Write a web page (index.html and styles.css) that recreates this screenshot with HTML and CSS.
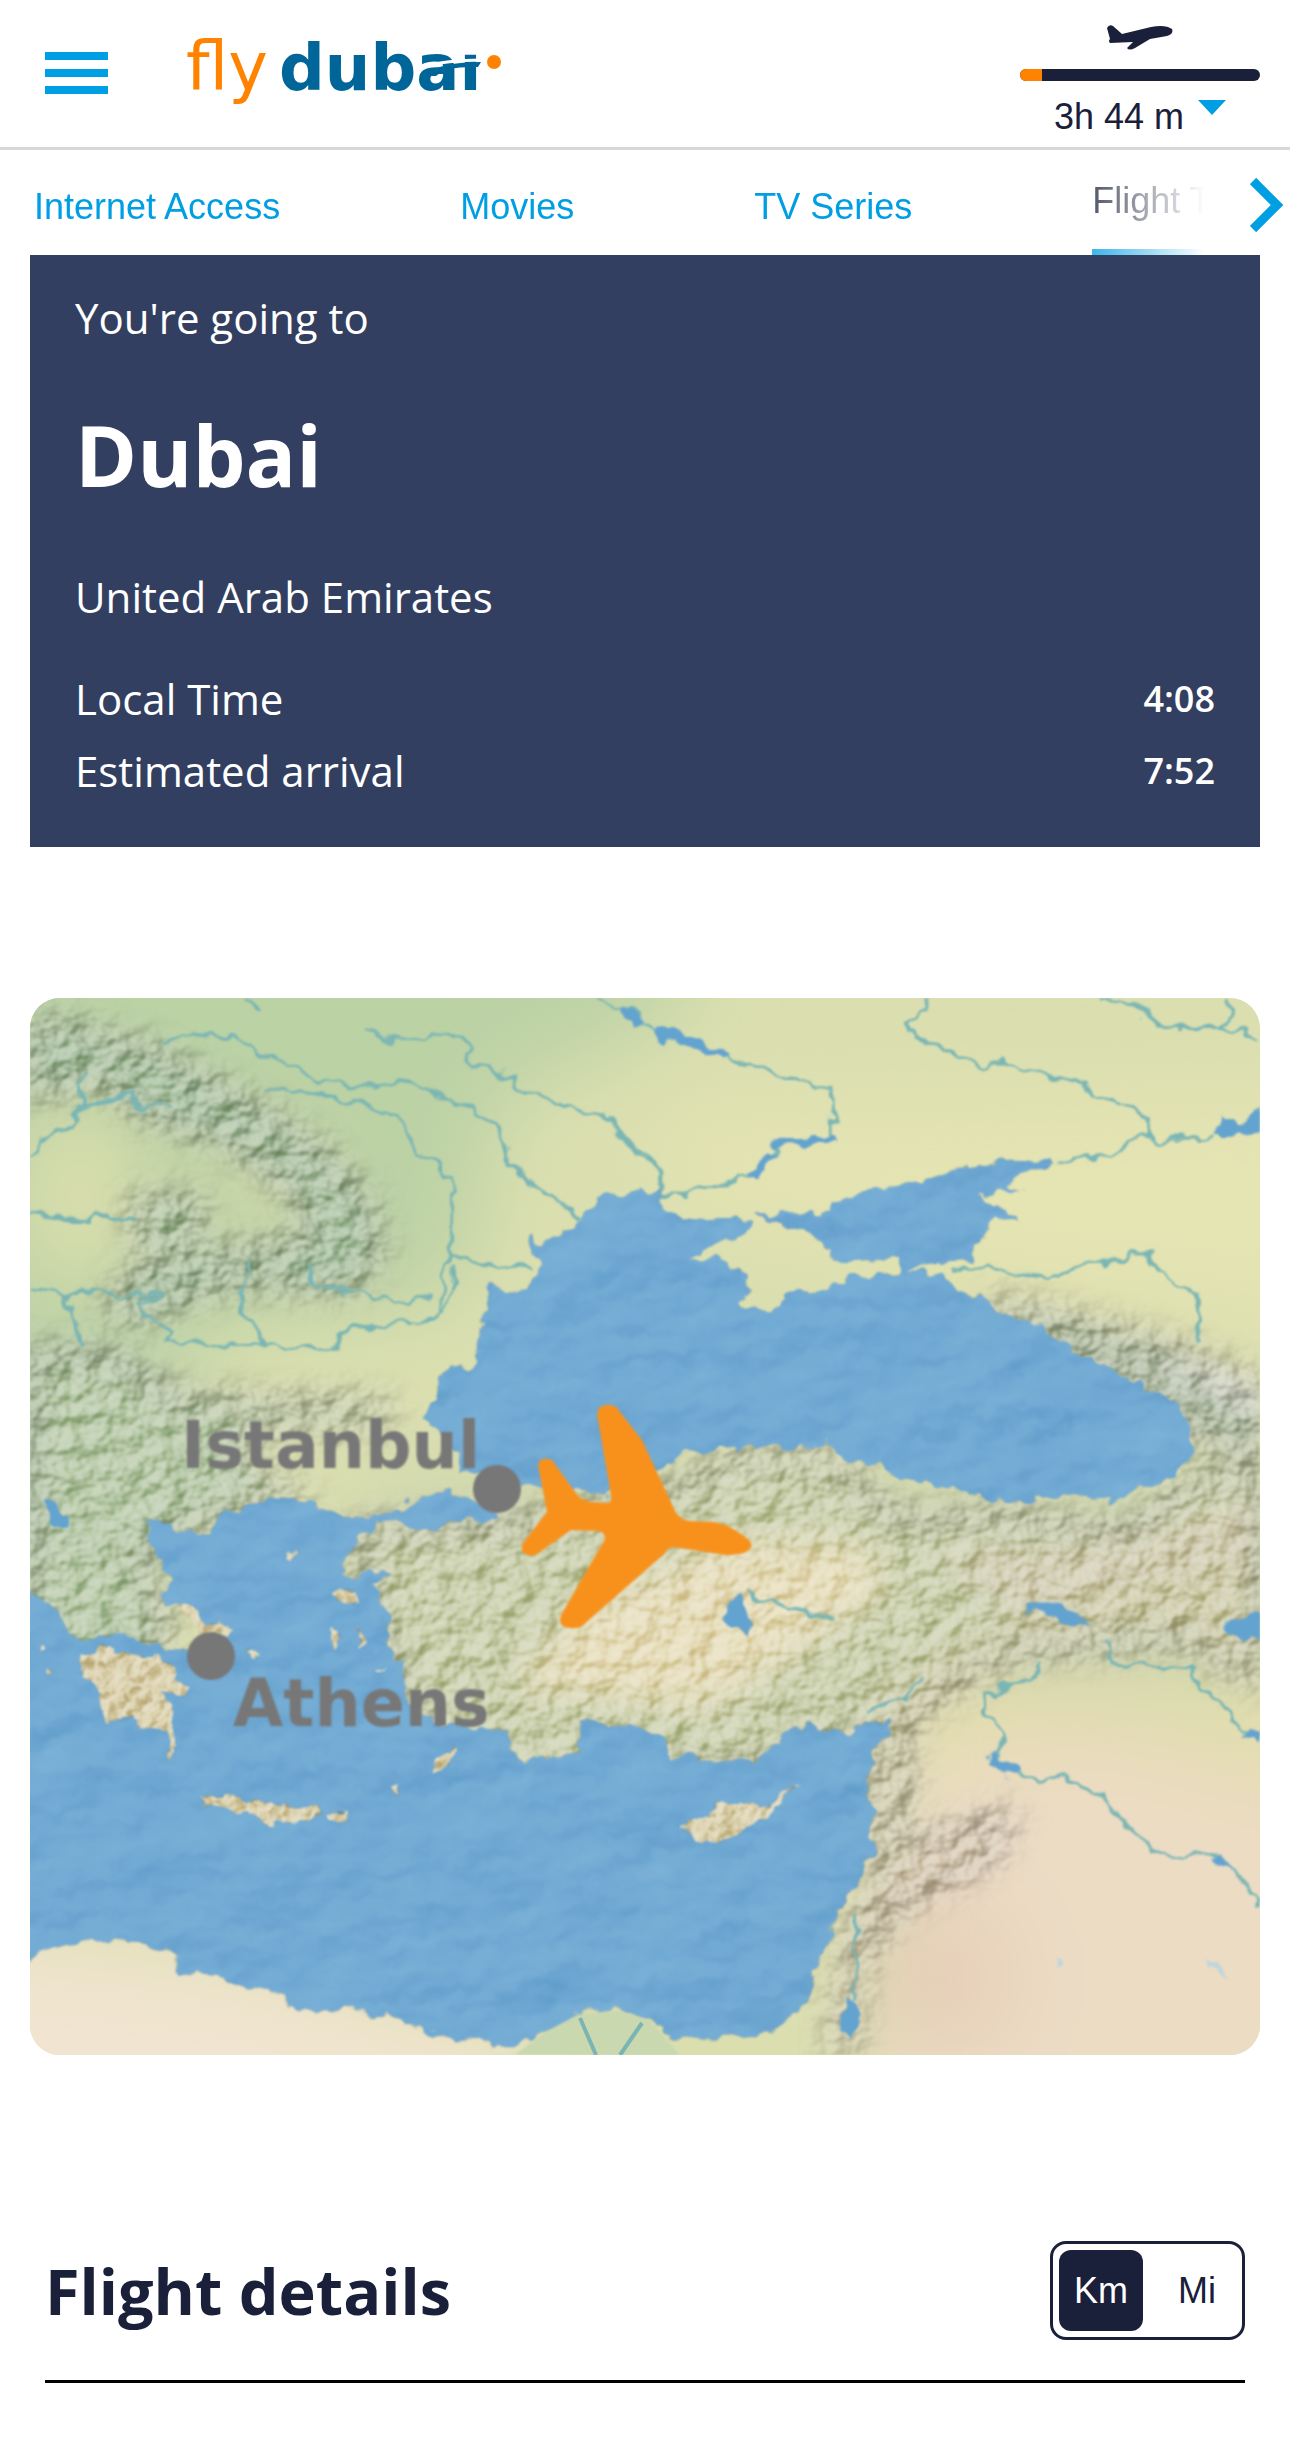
FILE: index.html
```html
<!DOCTYPE html>
<html lang="en">
<head>
<meta charset="utf-8">
<meta name="viewport" content="width=device-width, initial-scale=1">
<title>flydubai – Flight Tracker</title>
<link rel="stylesheet" href="styles.css">
</head>
<body>
<header class="header">
  <button class="menu" type="button" aria-label="Open menu"><span class="bar"></span><span class="bar"></span><span class="bar"></span></button>
  <a class="logo" href="#" aria-label="flydubai home">
    <svg width="330" height="110" viewBox="0 0 330 110">
      <text class="logo-fly" x="2" y="80">fly</text>
      <text class="logo-dubai" x="95" y="80">dubai</text>
      <!-- the i has no dot of its own: the swoosh cuts its stem instead -->
      <path d="M276 24H300V43H276Z" fill="#fff"/>
      <path d="M238 57Q262 50 299 50" fill="none" stroke="#fff" stroke-width="3"/>
      <path d="M242 66Q252 52 297 52L294 57Q262 56 252 66Z" fill="#006699"/>
      <circle cx="310" cy="52" r="7" fill="#ff8300"/>
    </svg>
  </a>
  <button class="flight" type="button">
    <svg class="flight-plane" width="66" height="25" viewBox="0 0 66 25"><path d="M0 3Q2-1 6 1L15 9 44 2Q58-1 65 4 67 9 60 11L43 14 28 23Q22 26 20 23L26 17 3 18Q1 16 3 14Z" fill="#1a2039"/></svg>
    <span class="progress"><span class="progress-done" style="width:9%"></span></span>
    <span class="remaining">3h 44 m<svg class="caret" width="28" height="15" viewBox="0 0 28 15"><path d="M0 0H28L14 15Z" fill="#009ee3"/></svg></span>
  </button>
</header>
<nav class="tabs" aria-label="Sections">
  <div class="tab-list">
    <a class="tab" href="#">Internet Access</a>
    <a class="tab" href="#">Movies</a>
    <a class="tab" href="#">TV Series</a>
    <a class="tab tab-active" href="#" aria-current="page">Flight Tracker</a>
  </div>
  <button class="next" type="button" aria-label="More sections"><svg width="34" height="54" viewBox="0 0 34 54"><path d="M3 3L27 27 3 51" fill="none" stroke="#009ee3" stroke-width="9"/></svg></button>
</nav>
<main class="main">
  <section class="destination">
    <p class="text">You're going to</p>
    <h1 class="city">Dubai</h1>
    <p class="text country">United Arab Emirates</p>
    <dl class="times">
      <div class="time-row"><dt>Local Time</dt><dd>4:08</dd></div>
      <div class="time-row"><dt>Estimated arrival</dt><dd>7:52</dd></div>
    </dl>
  </section>
  <svg class="map" viewBox="0 0 1230 1057" role="img" aria-label="Flight map">
    <defs>
      <filter id="soft" filterUnits="userSpaceOnUse" x="-150" y="-150" width="1530" height="1357"><feGaussianBlur stdDeviation="42"/></filter>
      <filter id="relief" filterUnits="userSpaceOnUse" x="0" y="0" width="1230" height="1057" color-interpolation-filters="sRGB">
        <feTurbulence type="fractalNoise" baseFrequency="0.04 0.045" numOctaves="3" seed="8" result="n"/>
        <feColorMatrix in="n" type="matrix" values="0 0 0 0 0  0 0 0 0 0  0 0 0 0 0  1 0 0 0 0" result="h"/>
        <feDiffuseLighting in="h" surfaceScale="11" diffuseConstant="0.84" lighting-color="#fff" result="l"><feDistantLight azimuth="225" elevation="50"/></feDiffuseLighting>
        <feGaussianBlur in="SourceGraphic" stdDeviation="17" result="s"/>
        <feColorMatrix in="l" type="saturate" values="0" result="g"/>
        <feBlend in="g" in2="s" mode="soft-light" result="b"/>
        <feComposite in="b" in2="s" operator="in" result="c"/>
        <feGaussianBlur in="c" stdDeviation="1"/>
      </filter>
      <filter id="isle" filterUnits="userSpaceOnUse" x="0" y="0" width="1230" height="1057" color-interpolation-filters="sRGB">
        <feTurbulence type="fractalNoise" baseFrequency="0.06" numOctaves="3" seed="4" result="n"/>
        <feColorMatrix in="n" type="matrix" values="0 0 0 0 0  0 0 0 0 0  0 0 0 0 0  1 0 0 0 0" result="h"/>
        <feDiffuseLighting in="h" surfaceScale="9" diffuseConstant="0.9" lighting-color="#fff" result="l"><feDistantLight azimuth="225" elevation="50"/></feDiffuseLighting>
        <feBlend in="l" in2="SourceGraphic" mode="soft-light" result="b"/>
        <feComposite in="b" in2="SourceGraphic" operator="in" result="c"/>
        <feDisplacementMap in="c" in2="n" scale="14" xChannelSelector="R" yChannelSelector="G" result="d"/>
        <feGaussianBlur in="d" stdDeviation="1"/>
      </filter>
      <filter id="seabed" filterUnits="userSpaceOnUse" x="-20" y="-20" width="1270" height="1097" color-interpolation-filters="sRGB">
        <feTurbulence type="fractalNoise" baseFrequency="0.01 0.018" numOctaves="3" seed="21" result="n"/>
        <feColorMatrix in="n" type="matrix" values="0 0 0 0 0  0 0 0 0 0  0 0 0 0 0  1 0 0 0 0" result="h"/>
        <feDiffuseLighting in="h" surfaceScale="5" diffuseConstant="0.66" lighting-color="#fff" result="l"><feDistantLight azimuth="225" elevation="50"/></feDiffuseLighting>
        <feBlend in="l" in2="SourceGraphic" mode="soft-light" result="b"/>
        <feComposite in="b" in2="SourceGraphic" operator="in" result="c"/>
        <feTurbulence type="fractalNoise" baseFrequency="0.06" numOctaves="2" seed="4" result="w"/>
        <feDisplacementMap in="c" in2="w" scale="18" xChannelSelector="R" yChannelSelector="G" result="d"/>
        <feGaussianBlur in="d" stdDeviation="1"/>
      </filter>
      <filter id="winding" filterUnits="userSpaceOnUse" x="0" y="0" width="1230" height="1057">
        <feTurbulence type="fractalNoise" baseFrequency="0.05" numOctaves="2" seed="4" result="w"/>
        <feDisplacementMap in="SourceGraphic" in2="w" scale="20" xChannelSelector="R" yChannelSelector="G" result="d"/>
        <feGaussianBlur in="d" stdDeviation="1"/>
      </filter>
      <filter id="edge" x="-10%" y="-10%" width="120%" height="120%"><feGaussianBlur stdDeviation="1"/></filter>
    </defs>
    <rect width="1230" height="1057" fill="#dbdfb0"/>
    <!-- climate tints -->
    <g filter="url(#soft)">
      <path d="M-150-150H700L640 20 470 100 430 300 200 330 130 380 -150 380Z" fill="#bbd2a5"/>
      <path d="M640 120L1380 100V330L960 280 640 200Z" fill="#e5e4b3"/>
      <ellipse cx="50" cy="200" rx="60" ry="95" fill="#dcdfad"/>
      <ellipse cx="230" cy="190" rx="70" ry="45" fill="#cfd9ab"/>
      <path d="M-150 370H120L200 480 100 600H-150Z" fill="#b7ceaa"/>
      <path d="M330 480H1380V640L900 720 330 760Z" fill="#cdd5ae"/>
      <path d="M850 660L1380 720V850L850 800Z" fill="#e3ddae"/>
      <path d="M860 780L1060 740 1380 830V1200H840Z" fill="#ecdcc4"/>
      <path d="M-150 920L200 960 500 1040V1200H-150Z" fill="#f1e4d0"/>
      <ellipse cx="910" cy="980" rx="70" ry="80" fill="#e6ceb8"/>
    </g>
    <!-- mountain relief -->
    <g filter="url(#relief)">
      <path d="M0 20L120 50 210 100 290 150 340 210 350 260 320 290 200 285 110 320 70 310 110 270 200 255 290 240 260 190 190 140 120 120 70 80 0 100Z" fill="#a5bf9e"/>
      <path d="M100 200L170 200 170 250 110 250Z" fill="#adc4a0"/>
      <path d="M0 350L90 360 150 400 360 405 360 425 200 435 230 480 290 500 180 520 110 560 140 620 120 700 0 690Z" fill="#b4c6a4"/>
      <path d="M320 530L480 525 640 490 700 460 800 455 870 520 960 515 1100 530 1160 480 1230 470V600L1150 640 960 660 860 720 760 770 600 780 460 790 390 740 350 650Z" fill="#c6cca8"/>
      <path d="M560 600L700 540 830 545 860 590 760 660 680 710 560 700 480 690Z" fill="#e4dab6"/>
      <path d="M900 560L1100 540 1230 500V580L1000 620Z" fill="#cfc9ae"/>
      <path d="M960 300L1080 330 1150 350 1230 390V470L1150 430 1050 370 960 320Z" fill="#a9b79e"/>
      <path d="M850 700L900 660 1050 600 1230 560V690L1150 640 1000 640 880 720 870 860 850 880 840 760Z" fill="#cbc9a6"/>
      <path d="M820 930L880 850 990 810 960 860 880 900 830 960 820 1057 800 1057Z" fill="#d6c6aa"/>
      <path d="M1100 365L1170 385 1240 420V390L1180 365Z" fill="#e0dcdc"/>
    </g>
    <g filter="url(#winding)">
      <!-- rivers, northwest -->
      <g class="river" transform="translate(0 -8) scale(.408 .357)">
        <path d="M320 150L400 120 500 135 580 180 640 220 700 250 790 280 850 265 930 255 1010 300 1090 340 1140 380 1165 440 1170 490 1230 540 1300 590 1345 640"/>
        <path d="M820 120L900 140 960 140 1000 120 1060 130 1075 160 1060 190 1120 220 1180 250 1200 275 1260 300 1300 330 1410 345 1440 400 1510 450 1540 510 1540 560"/>
        <path d="M570 270L720 290 790 320 880 330 920 400 1000 500 1035 530 1035 640 1035 745 1130 770 1230 780M1035 745L1010 780 1000 850 1010 900 960 935 860 940 780 955 720 1005 650 1010 570 995 430 990 335 985 345 950 300 920 270 880 315 860 230 855 160 850 90 850 60 845 0 835M1035 770L1035 820 1015 900M540 760L515 840 530 920 575 995M675 780L700 830 780 850 860 860 920 880 985 860"/>
        <path d="M0 465L30 415 80 395 130 330 180 310 245 290 265 330 350 330M0 630L60 640 250 640M90 850L110 920 125 1000M130 230L130 330M520 20L560 60"/>
      </g>
      <!-- rivers, northeast -->
      <g class="river" transform="translate(610 -8) scale(.408 .357)">
        <path d="M-120 20L-60 55-10 65 0 100 50 120 140 150 200 185 300 215 400 265 470 285 470 410M480 420L330 430 320 470 270 520 180 545 110 575 40 575M-60 400L0 450 45 510 45 570"/>
        <path d="M700 20L700 65 645 100 660 125 720 155 780 180 840 215 890 205 990 240 1090 265 1110 295 1200 325 1245 360 1250 410 1190 430 1160 465 1090 470 1010 495M1250 415H1400M1120 25L1180 30 1250 75 1300 110 1440 110 1519 140M1430 20L1450 80 1430 110"/>
        <path d="M770 785L890 785 1000 810 1110 765 1200 745 1245 745 1270 800 1370 850 1385 920 1370 1000"/>
        <path class="wide" d="M40 115L140 150 210 190M320 430L480 420M270 520L320 460M-40 60L0 95"/>
      </g>
      <!-- rivers, southeast -->
      <g class="river" transform="translate(610 512) scale(.408 .357)">
        <path d="M980 430L960 480 840 520 850 570 890 630 870 700 920 745 1060 755 1120 790 1180 870 1270 970 1400 960 1460 1020 1519 1100M1140 370L1155 430 1350 450 1370 500 1430 540 1460 590 1519 640M250 230L340 265 410 300 470 300M530 1130L530 1370M700 480L640 530 560 570"/>
        <path class="wide" d="M860 690L920 745M1410 975L1440 1010M1490 620L1519 645"/>
      </g>
      <!-- lakes -->
      <g fill="#64a3cf" transform="translate(610 512) scale(.408 .357)">
        <path d="M235 245L255 290 280 320 260 350 205 315 210 270ZM940 265L1000 265 1060 290 1100 320 1040 325 990 285 940 290ZM1430 345L1450 300 1530 280V365ZM510 1370L540 1375 525 1475 495 1475Z"/>
        <path d="M1400-1045L1430-1105 1460-1075 1490-1100 1530-1135V-1065L1440-1045Z"/>
        <path d="M1015 1240L1030 1270 1020 1285ZM1385 1260L1445 1320 1395 1300Z" fill="#bdd5dc"/>
      </g>
      <path d="M12 497L38 515 40 530 24 528Z" fill="#64a3cf"/>
    </g>
    <!-- seas -->
    <g filter="url(#seabed)" fill="#71aad3">
      <path transform="translate(610 -8) scale(.408 .357)" d="M-104 580L-54 570-4 565 50 570 50 610 100 640 160 645 230 640 270 650 272 675 190 700 120 750 190 755 250 790 270 840 245 885 320 895 380 850 470 830 530 800 560 805 640 790 640 750 510 765 470 750 460 710 400 670 340 660 280 625 430 625 475 610 480 590 560 565 640 550 700 530 790 495 920 480 1010 462 1025 490 930 520 900 545 935 560 830 575 890 610 935 655 880 640 850 670 820 710 815 755 730 765 720 755 700 775 660 785 740 800 760 820 780 850 840 850 880 900 960 930 1030 980 1110 1040 1200 1095 1320 1150 1335 1210 1355 1280 1340 1330 1300 1370 1220 1400 1150 1430 1040 1410 960 1430 890 1435 790 1405 720 1380 620 1365 590 1320 510 1325 470 1285 460 1260 430 1285 250 1275 120 1300 50 1345 0 1380-60 1410-114 1415-204 1395-294 1385-374 1360-444 1350-454 1300-484 1250-519 1215-529 1180-494 1140-494 1100-464 1055-409 1050-404 1020-394 960-386 910-374 850-364 820-324 850-269 840-259 790-249 760-269 720-264 680-249 715-214 685-164 665-144 645-124 605Z"/>
      <path transform="translate(0 512) scale(.408 .357)" d="M290 40L330 19 345 50 380 70 440 65 455 20 520-20 560-15 620-36 730-10 770 20 850 15 910-5 960-40 1020-50 1090-30 1150 15 1130 25 1000 45 960 60 900 35 860 40 810 70 770 150 770 190 880 165 850 210 860 260 880 290 870 380 910 430 910 500 950 560 1030 600 1120 610 1165 620 1175 670 1210 700 1340 685 1350 600 1370 590 1470 605 1554 635 1584 690 1654 705 1784 700 1834 650 1864 610 1924 605 1994 630 2054 590 2104 585 2109 620 2059 680 2074 720 2054 780 2069 830 2064 900 2079 950 2039 1000 2024 1050 1984 1110 1954 1200 1924 1310 1884 1400 1824 1455 1764 1475 1568 1475 1520 1430 1440 1400 1340 1415 1250 1470 1190 1505 1130 1500 1120 1480 1010 1475 930 1445 870 1420 780 1400 640 1400 600 1340 490 1330 470 1310 370 1300 350 1240 280 1215 170 1195 60 1220-40 1290V220L50 255 75 300 110 355 230 350 300 380 370 395 440 390 490 350 430 320 390 265 330 270 320 240 350 205 310 120Z"/>
    </g>
    <!-- Nile delta -->
    <path d="M485 1057L510 1037 547 1017 588 1012 620 1022 650 1057Z" fill="#cad8b0" filter="url(#edge)"/>
    <g class="river"><path d="M550 1020L566 1057M612 1025L590 1057"/></g>
    <!-- islands -->
    <g filter="url(#isle)" fill="#d8cda8">
      <g transform="translate(0 512) scale(.408 .357)">
        <path d="M125 410L190 380 230 400 310 405 350 440 360 480 395 500 370 520 320 500 350 570 355 650 345 700 335 620 280 610 230 570 190 605 165 550 175 510 130 460Z"/>
        <path d="M360 265L400 270 440 315 495 335 490 360 420 340Z"/>
        <path d="M420 800L500 795 530 825 590 815 620 830 690 830 710 855 660 875 590 880 530 845 430 835ZM720 855L780 845 775 875 725 870Z"/>
        <path d="M980 740L1000 690 1045 665 1030 710ZM735 235L790 220 805 260 750 250ZM735 330L760 340 750 390ZM805 325L820 370 805 390ZM525 400L565 410 540 425ZM625 120L655 110 640 140ZM20 370L40 390 25 400ZM40 450L60 450 50 465ZM885 770L905 765 895 800ZM840 450L875 455 850 465Z"/>
      </g>
      <path transform="translate(610 512) scale(.408 .357)" d="M95 885L170 860 180 825 230 830 310 820 400 765 330 825 310 870 260 880 220 920 170 930 120 915Z"/>
    </g>
    <!-- cities and aircraft -->
    <g filter="url(#edge)">
      <g fill="#777">
        <circle cx="467" cy="491" r="24"/>
        <circle cx="181" cy="658" r="24"/>
        <text class="map-label" x="151" y="470">Istanbul</text>
        <text class="map-label" x="203" y="728">Athens</text>
      </g>
      <path d="M567 416Q568 407 577 407 587 406 590 414L612 442 645 513Q650 522 660 523L683 524Q700 526 720 543 726 557 696 557L643 549Q637 550 634 556L552 628Q546 632 535 629 528 627 531 617L575 541Q575 533 567 533L541 532 507 556Q500 560 494 555 490 552 493 545L517 514 508 467Q510 458 522 462L545 494Q550 502 562 504L576 505Q583 505 581 497Z" fill="#f8911f"/>
    </g>
  </svg>
  <section class="details">
    <h2 class="details-title">Flight details</h2>
    <div class="units" role="group" aria-label="Distance unit">
      <button class="unit unit-on" type="button" aria-pressed="true">Km</button>
      <button class="unit" type="button" aria-pressed="false">Mi</button>
    </div>
  </section>
</main>
</body>
</html>
```
FILE: styles.css
```css
* { box-sizing: border-box; }
body {
  margin: 0;
  background: #fff;
  color: #1a2039;
  font-family: "Liberation Sans", Arial, sans-serif;
  font-size: 36px;
}
button {
  margin: 0;
  padding: 0;
  border: 0;
  background: none;
  color: inherit;
  font: inherit;
  cursor: pointer;
}
a { text-decoration: none; }
svg { display: block; }

.header {
  display: flex;
  align-items: flex-start;
  height: 150px;
  padding: 0 30px 0 45px;
  border-bottom: 3px solid #d8d8d8;
}
.menu {
  display: flex;
  flex-direction: column;
  gap: 9px;
  margin-top: 52px;
}
.bar { width: 63px; height: 8px; background: #009ee3; }
.logo { margin: 10px auto 0 76px; }
.logo-fly, .logo-dubai { font-family: "DejaVu Sans", sans-serif; }
.logo-fly { font-size: 67px; fill: #ff8300; }
.logo-dubai { font-size: 64px; font-weight: 700; fill: #006699; }
.flight {
  display: flex;
  flex-direction: column;
  align-items: center;
  width: 240px;
  padding-top: 25px;
}
.progress {
  width: 100%;
  height: 12px;
  margin-top: 19px;
  overflow: hidden;
  border-radius: 6px;
  background: #1a2039;
}
.progress-done { display: block; height: 100%; background: #ff8300; }
.remaining {
  display: flex;
  gap: 14px;
  margin-top: 15px;
  line-height: 42px;
}
.caret { margin-top: 4px; }

.tabs { display: flex; align-items: flex-start; height: 105px; }
.tab-list {
  display: flex;
  flex: 1;
  gap: 180px;
  min-width: 0;
  margin-right: 45px;
  padding-left: 34px;
  overflow: hidden;
  -webkit-mask-image: linear-gradient(to left, transparent, #000 150px);
  mask-image: linear-gradient(to left, transparent, #000 150px);
}
.tab {
  flex: none;
  height: 105px;
  color: #009ee3;
  line-height: 114px;
  white-space: nowrap;
}
.tab-active {
  border-bottom: 6px solid #009ee3;
  color: #1a2039;
  line-height: 102px;
}
.next { margin: 28px 6px 0 0; }

.main { padding: 0 30px; }
.destination {
  padding: 35px 45px 48px;
  background: #333f61;
  color: #fff;
  font: 42px/56px "Open Sans", sans-serif;
}
.text { margin: 0; }
.city { margin: 53px 0 58px; font-size: 84px; line-height: 112px; }
.times { display: flex; flex-direction: column; gap: 16px; margin: 46px 0 0; }
.time-row { display: flex; justify-content: space-between; align-items: center; }
.time-row dd { margin: 0; font-size: 36px; font-weight: 600; }

.map {
  width: 100%;
  height: auto;
  margin-top: 151px;
  border-radius: 30px;
}
.river path {
  fill: none;
  stroke: #7ab5b4;
  stroke-width: 4;
  stroke-linejoin: round;
}
.river[transform] path { stroke-width: 9; }
.river[transform] .wide { stroke: #64a3cf; stroke-width: 22; }
.map-label { font: 700 65px "DejaVu Sans", sans-serif; }

.details {
  display: flex;
  justify-content: space-between;
  align-items: center;
  margin: 186px 15px 76px;
  padding-bottom: 40px;
  border-bottom: 3px solid #000;
}
.details-title { margin: 0; font: 700 63px/80px "Open Sans", sans-serif; }
.units {
  display: flex;
  justify-content: space-between;
  width: 195px;
  padding: 6px 3px 6px 6px;
  border: 3px solid #1a2039;
  border-radius: 16px;
}
.unit { width: 84px; height: 81px; border-radius: 12px; }
.unit-on { background: #1a2039; color: #fff; }
```
